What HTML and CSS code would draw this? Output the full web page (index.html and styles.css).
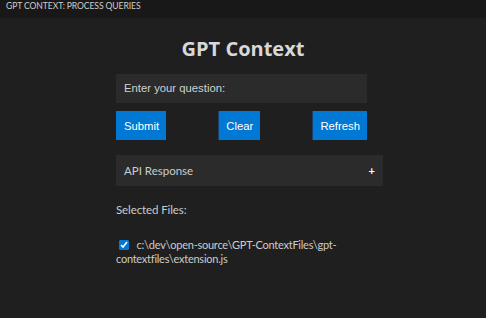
FILE: index.html
```html
<!DOCTYPE html>
<html>
<head>
<meta charset="utf-8">
<link rel="stylesheet" href="styles.css">
</head>
<body>
<div class="titlebar">GPT CONTEXT: PROCESS QUERIES</div>
<main class="main">
  <h1 class="title">GPT Context</h1>
  <div class="column">
    <div class="question">Enter your question:</div>
    <div class="buttons">
      <button class="btn">Submit</button>
      <button class="btn">Clear</button>
      <button class="btn">Refresh</button>
    </div>
    <div class="response">
      <span>API Response</span>
      <span class="plus">+</span>
    </div>
    <div class="selected">Selected Files:</div>
    <div class="files">
      <label class="file"><input type="checkbox" class="check" checked> c:\dev\open-source\GPT-ContextFiles\gpt-contextfiles\extension.js</label>
    </div>
  </div>
</main>
</body>
</html>
```
FILE: styles.css
```css
html, body {
  margin: 0;
  padding: 0;
  background: #1f1f1f;
  color: #cccccc;
  font-family: Lato, "Open Sans", sans-serif;
  font-size: 11.5px;
  width: 486px;
  height: 318px;
  overflow: hidden;
}
.titlebar {
  height: 18px;
  background: #181818;
  font-size: 8.6px;
  line-height: 13px;
  padding-left: 6px;
  color: #cccccc;
  letter-spacing: -0.1px;
}
.main {
  padding: 0 103px 0 116px;
}
.title {
  margin: 18px 0 0 0;
  font-family: "Open Sans", sans-serif;
  font-size: 20px;
  line-height: 26px;
  font-weight: 700;
  text-align: center;
  color: #d8d8d8;
  width: 254px;
}
.column {
  margin-top: 12px;
  width: 267px;
}
.question {
  width: 243px;
  height: 29px;
  background: #2b2b2b;
  font-family: "Liberation Sans", Arial, sans-serif;
  font-size: 11.3px;
  line-height: 29px;
  padding-left: 8px;
  color: #d0d0d0;
}
.buttons {
  display: flex;
  justify-content: space-between;
  width: 251px;
  margin-top: 8px;
}
.btn {
  height: 29px;
  padding: 0 7px 0 7px;
  border: none;
  border-left: 1px solid #1b3f66;
  background: #0078d4;
  color: #ffffff;
  font-family: "Liberation Sans", Arial, sans-serif;
  font-size: 11.3px;
}
.btn:first-child {
  border-left: none;
  padding: 0 7px 0 8px;
}
.response {
  margin-top: 15px;
  height: 31px;
  background: #2b2b2b;
  display: flex;
  align-items: center;
  justify-content: space-between;
  padding: 0 8px;
  color: #cccccc;
}
.plus {
  font-weight: 700;
  font-size: 11px;
  color: #ffffff;
}
.selected {
  margin-top: 17px;
  line-height: 14px;
  letter-spacing: -0.1px;
}
.files {
  margin-top: 21px;
  width: 267px;
  line-height: 13.5px;
  font-size: 11px;
  letter-spacing: -0.25px;
}
.file {
  display: block;
}
.check {
  margin: 0 5px 0 3px;
  width: 10px;
  height: 10px;
  vertical-align: -1px;
  accent-color: #0078d4;
}
```
